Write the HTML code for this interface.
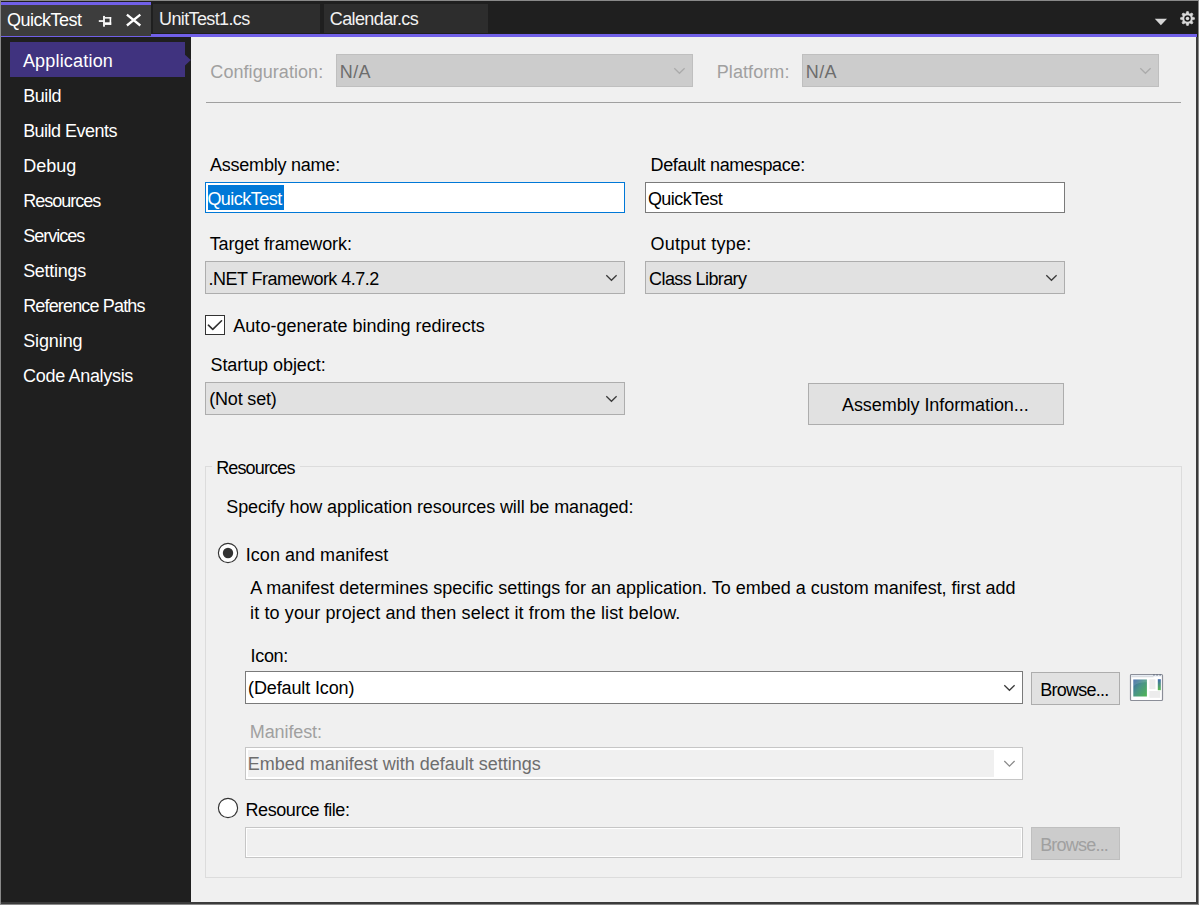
<!DOCTYPE html><html><head><meta charset="utf-8"><title>QuickTest</title><style>html,body{margin:0;padding:0;}body{width:1199px;height:905px;position:relative;overflow:hidden;background:#1f1f1f;font-family:"Liberation Sans",sans-serif;}.t{position:absolute;white-space:nowrap;margin:0;padding:0;}.r{position:absolute;display:block;}</style></head><body>
<div class="r" style="left:0px;top:0px;width:1199px;height:905px;background:#898989;"></div>
<div class="r" style="left:1px;top:1px;width:1197px;height:903px;background:#1f1f1f;"></div>
<div class="r" style="left:1px;top:902px;width:1197px;height:2px;background:#3b3b3b;"></div>
<div class="r" style="left:1196px;top:37px;width:2px;height:867px;background:#3b3b3b;"></div>
<div class="r" style="left:191px;top:37px;width:1005px;height:865px;background:#f0f0f0;"></div>
<div class="r" style="left:1px;top:2px;width:150px;height:3px;background:#7160e8;"></div>
<div class="r" style="left:1px;top:5px;width:150px;height:31px;background:#3d3d3d;"></div>
<div class="r" style="left:1px;top:36px;width:150px;height:1px;background:#7160e8;"></div>
<div class="r" style="left:151px;top:34px;width:1046px;height:3px;background:#7160e8;"></div>
<div class="r" style="left:153px;top:4px;width:167px;height:29px;background:#2d2d2d;"></div>
<div class="r" style="left:324px;top:4px;width:164px;height:29px;background:#2d2d2d;"></div>
<div class="t" style="left:7.10px;top:10px;font-size:18px;line-height:20px;letter-spacing:-0.519px;color:#ffffff;">QuickTest</div>
<div class="t" style="left:159.05px;top:9px;font-size:18px;line-height:20px;letter-spacing:-0.632px;color:#f1f1f1;">UnitTest1.cs</div>
<div class="t" style="left:329.85px;top:9px;font-size:18px;line-height:20px;letter-spacing:-0.625px;color:#f1f1f1;">Calendar.cs</div>
<svg class="r" style="left:97px;top:14px" width="16" height="14" viewBox="97 14 16 14" shape-rendering="auto"><rect x="98.8" y="20.2" width="4.6" height="1.7" fill="#fff"/><rect x="103.1" y="15.9" width="1.8" height="10.8" fill="#fff"/><rect x="104.8" y="17.1" width="6.4" height="1.5" fill="#fff"/><rect x="109.6" y="17.1" width="1.6" height="7.8" fill="#fff"/><rect x="104.8" y="22.3" width="6.4" height="2.6" fill="#fff"/></svg>
<svg class="r" style="left:124px;top:12px" width="20" height="16" viewBox="0 0 20 16"><path d="M2.9 2.6L16.3 13.5M16.3 2.6L2.9 13.5" stroke="#fff" stroke-width="2.3" fill="none"/></svg>
<svg class="r" style="left:1154px;top:18px" width="14" height="8" viewBox="0 0 14 8"><path d="M0.8 0.8H13L6.9 7.2Z" fill="#d6d6d6"/></svg>
<svg class="r" style="left:1179px;top:10px" width="18" height="18" viewBox="-0.5 -0.5 18 18"><path d="M6.40 3.37 L7.20 1.00 L8.80 1.00 L9.60 3.37 L10.15 3.60 L12.39 2.48 L13.52 3.61 L12.40 5.85 L12.63 6.40 L15.00 7.20 L15.00 8.80 L12.63 9.60 L12.40 10.15 L13.52 12.39 L12.39 13.52 L10.15 12.40 L9.60 12.63 L8.80 15.00 L7.20 15.00 L6.40 12.63 L5.85 12.40 L3.61 13.52 L2.48 12.39 L3.60 10.15 L3.37 9.60 L1.00 8.80 L1.00 7.20 L3.37 6.40 L3.60 5.85 L2.48 3.61 L3.61 2.48 L5.85 3.60Z" fill="#d9d9d9" stroke="#d9d9d9" stroke-width="0.6" stroke-linejoin="round"/><circle cx="8" cy="8" r="3.25" fill="#1f1f1f"/><circle cx="8" cy="8" r="1.75" fill="#d9d9d9"/></svg>
<div class="r" style="left:10px;top:42px;width:175px;height:35px;background:#40337f;"></div>
<svg class="r" style="left:185px;top:53px" width="6" height="14" viewBox="0 0 6 14"><path d="M0 1.7L5.8 7.1L0 12.5Z" fill="#40337f"/></svg>
<div class="t" style="left:22.90px;top:51px;font-size:18px;line-height:20px;letter-spacing:0.190px;color:#ffffff;">Application</div>
<div class="t" style="left:23.15px;top:86px;font-size:18px;line-height:20px;letter-spacing:-0.400px;color:#ffffff;">Build</div>
<div class="t" style="left:23.15px;top:121px;font-size:18px;line-height:20px;letter-spacing:-0.523px;color:#ffffff;">Build Events</div>
<div class="t" style="left:23.15px;top:156px;font-size:18px;line-height:20px;letter-spacing:0.038px;color:#ffffff;">Debug</div>
<div class="t" style="left:23.15px;top:191px;font-size:18px;line-height:20px;letter-spacing:-0.981px;color:#ffffff;">Resources</div>
<div class="t" style="left:23.15px;top:226px;font-size:18px;line-height:20px;letter-spacing:-1.000px;color:#ffffff;">Services</div>
<div class="t" style="left:23.15px;top:261px;font-size:18px;line-height:20px;letter-spacing:-0.279px;color:#ffffff;">Settings</div>
<div class="t" style="left:23.15px;top:296px;font-size:18px;line-height:20px;letter-spacing:-0.836px;color:#ffffff;">Reference Paths</div>
<div class="t" style="left:23.15px;top:331px;font-size:18px;line-height:20px;letter-spacing:-0.108px;color:#ffffff;">Signing</div>
<div class="t" style="left:23.05px;top:366px;font-size:18px;line-height:20px;letter-spacing:-0.313px;color:#ffffff;">Code Analysis</div>
<div class="t" style="left:210.35px;top:62px;font-size:18px;line-height:20px;letter-spacing:0.058px;color:#a0a0a0;">Configuration:</div>
<div class="r" style="left:336px;top:54px;width:357px;height:33px;background:#cccccc;box-shadow:inset 0 0 0 1px #bfbfbf"></div>
<div class="t" style="left:339.75px;top:62px;font-size:18px;line-height:20px;letter-spacing:0.400px;color:#6d6d6d;">N/A</div>
<svg class="r" style="left:672px;top:66px" width="16" height="11"><path transform="translate(2.30 2.20)" d="M0 0 L5.15 5.1 L10.3 0" fill="none" stroke="#ababab" stroke-width="1.25"/></svg>
<div class="t" style="left:716.75px;top:62px;font-size:18px;line-height:20px;letter-spacing:0.081px;color:#a0a0a0;">Platform:</div>
<div class="r" style="left:802px;top:54px;width:357px;height:33px;background:#cccccc;box-shadow:inset 0 0 0 1px #bfbfbf"></div>
<div class="t" style="left:805.75px;top:62px;font-size:18px;line-height:20px;letter-spacing:0.400px;color:#6d6d6d;">N/A</div>
<svg class="r" style="left:1138px;top:66px" width="16" height="11"><path transform="translate(2.30 2.20)" d="M0 0 L5.15 5.1 L10.3 0" fill="none" stroke="#ababab" stroke-width="1.25"/></svg>
<div class="r" style="left:206px;top:102px;width:975px;height:1px;background:#a0a0a0;"></div>
<div class="t" style="left:210.00px;top:155px;font-size:18px;line-height:20px;letter-spacing:-0.223px;color:#000000;">Assembly name:</div>
<div class="r" style="left:205px;top:182px;width:420px;height:31px;background:#ffffff;box-shadow:inset 0 0 0 1px #0078d7"></div>
<div class="r" style="left:208px;top:185px;width:76px;height:25px;background:#0078d7;"></div>
<div class="t" style="left:207.40px;top:189px;font-size:18px;line-height:20px;letter-spacing:-0.519px;color:#ffffff;">QuickTest</div>
<div class="t" style="left:650.50px;top:155px;font-size:18px;line-height:20px;letter-spacing:-0.321px;color:#000000;">Default namespace:</div>
<div class="r" style="left:645px;top:182px;width:420px;height:31px;background:#ffffff;box-shadow:inset 0 0 0 1px #7a7a7a"></div>
<div class="t" style="left:647.90px;top:189px;font-size:18px;line-height:20px;letter-spacing:-0.519px;color:#000000;">QuickTest</div>
<div class="t" style="left:209.65px;top:234px;font-size:18px;line-height:20px;letter-spacing:-0.113px;color:#000000;">Target framework:</div>
<div class="r" style="left:205px;top:261px;width:420px;height:33px;background:#e1e1e1;box-shadow:inset 0 0 0 1px #adadad"></div>
<div class="t" style="left:208.60px;top:269px;font-size:18px;line-height:20px;letter-spacing:-0.534px;color:#000000;">.NET Framework 4.7.2</div>
<svg class="r" style="left:604px;top:273px" width="16" height="11"><path transform="translate(2.30 2.20)" d="M0 0 L5.15 5.1 L10.3 0" fill="none" stroke="#3a3a3a" stroke-width="1.25"/></svg>
<div class="t" style="left:650.40px;top:234px;font-size:18px;line-height:20px;letter-spacing:0.245px;color:#000000;">Output type:</div>
<div class="r" style="left:645px;top:261px;width:420px;height:33px;background:#e1e1e1;box-shadow:inset 0 0 0 1px #adadad"></div>
<div class="t" style="left:649.10px;top:269px;font-size:18px;line-height:20px;letter-spacing:-0.592px;color:#000000;">Class Library</div>
<svg class="r" style="left:1044px;top:273px" width="16" height="11"><path transform="translate(2.30 2.20)" d="M0 0 L5.15 5.1 L10.3 0" fill="none" stroke="#3a3a3a" stroke-width="1.25"/></svg>
<div class="r" style="left:205px;top:315px;width:20px;height:20px;background:#ffffff;box-shadow:inset 0 0 0 1px #333333"></div>
<svg class="r" style="left:205px;top:315px" width="20" height="20" viewBox="0 0 20 20"><path d="M3.4 10.2L7.75 14.35L16.55 5.75" fill="none" stroke="#303030" stroke-width="1.6" stroke-linecap="round" stroke-linejoin="round"/></svg>
<div class="t" style="left:233.35px;top:316px;font-size:18px;line-height:20px;letter-spacing:0.005px;color:#000000;">Auto-generate binding redirects</div>
<div class="t" style="left:210.45px;top:355px;font-size:18px;line-height:20px;letter-spacing:-0.061px;color:#000000;">Startup object:</div>
<div class="r" style="left:205px;top:382px;width:420px;height:33px;background:#e1e1e1;box-shadow:inset 0 0 0 1px #adadad"></div>
<div class="t" style="left:209.15px;top:389px;font-size:18px;line-height:20px;letter-spacing:-0.163px;color:#000000;">(Not set)</div>
<svg class="r" style="left:604px;top:394px" width="16" height="11"><path transform="translate(2.30 2.20)" d="M0 0 L5.15 5.1 L10.3 0" fill="none" stroke="#3a3a3a" stroke-width="1.25"/></svg>
<div class="r" style="left:808px;top:383px;width:256px;height:42px;background:#e1e1e1;box-shadow:inset 0 0 0 1px #adadad"></div>
<div class="t" style="left:841.95px;top:395px;font-size:18px;line-height:20px;letter-spacing:-0.061px;color:#000000;">Assembly Information...</div>
<div class="r" style="left:205px;top:466px;width:977px;height:412px;background:transparent;box-shadow:inset 0 0 0 1px #dcdcdc"></div>
<div class="r" style="left:212px;top:460px;width:88px;height:14px;background:#f0f0f0;"></div>
<div class="t" style="left:216.15px;top:458px;font-size:18px;line-height:20px;letter-spacing:-0.844px;color:#000000;">Resources</div>
<div class="t" style="left:226.25px;top:497px;font-size:18px;line-height:20px;letter-spacing:-0.101px;color:#000000;">Specify how application resources will be managed:</div>
<svg class="r" style="left:217px;top:542px" width="23" height="23"><circle cx="11" cy="11" r="9.6" fill="#fff" stroke="#333" stroke-width="1.15"/><circle cx="11" cy="11" r="5.2" fill="#333"/></svg>
<div class="t" style="left:245.80px;top:545px;font-size:18px;line-height:20px;letter-spacing:0.028px;color:#000000;">Icon and manifest</div>
<div class="t" style="left:250.30px;top:578px;font-size:18px;line-height:20px;letter-spacing:-0.008px;color:#000000;">A manifest determines specific settings for an application. To embed a custom manifest, first add</div>
<div class="t" style="left:250.05px;top:603px;font-size:18px;line-height:20px;letter-spacing:0.123px;color:#000000;">it to your project and then select it from the list below.</div>
<div class="t" style="left:250.60px;top:646px;font-size:18px;line-height:20px;letter-spacing:-0.337px;color:#000000;">Icon:</div>
<div class="r" style="left:245px;top:671px;width:778px;height:33px;background:#ffffff;box-shadow:inset 0 0 0 1px #7a7a7a"></div>
<div class="t" style="left:248.05px;top:678px;font-size:18px;line-height:20px;letter-spacing:-0.131px;color:#000000;">(Default Icon)</div>
<svg class="r" style="left:1002px;top:683px" width="16" height="11"><path transform="translate(2.30 2.20)" d="M0 0 L5.15 5.1 L10.3 0" fill="none" stroke="#3a3a3a" stroke-width="1.25"/></svg>
<div class="r" style="left:1031px;top:672px;width:89px;height:33px;background:#e1e1e1;box-shadow:inset 0 0 0 1px #adadad"></div>
<div class="t" style="left:1040.15px;top:680px;font-size:18px;line-height:20px;letter-spacing:-0.750px;color:#000000;">Browse...</div>
<svg class="r" style="left:1129px;top:673px" width="36" height="30" viewBox="0 0 36 30"><defs><linearGradient id="g1" x1="0" y1="0" x2="1" y2="1"><stop offset="0" stop-color="#3a62a8"/><stop offset="0.45" stop-color="#4a9488"/><stop offset="1" stop-color="#4fb651"/></linearGradient><linearGradient id="g2" x1="0" y1="0" x2="0" y2="1"><stop offset="0" stop-color="#3f69ae"/><stop offset="1" stop-color="#58ba4e"/></linearGradient></defs><rect x="1.5" y="1.5" width="32" height="26" rx="1.0" fill="#ffffff" stroke="#8b8e98" stroke-width="1.2"/><rect x="2.2" y="2.2" width="30.6" height="1.3" fill="#dfe6ef"/><rect x="2.6" y="3.4" width="22" height="0.8" fill="#c9ccd2"/><rect x="24.3" y="1" width="1.3" height="1.6" fill="#6d7585"/><rect x="27.4" y="1" width="1.3" height="1.6" fill="#6d7585"/><rect x="30.5" y="1" width="1.3" height="1.6" fill="#6d7585"/><rect x="4.3" y="6.5" width="13.6" height="17" fill="url(#g1)"/><path d="M4.3 13.5C7 10.5 12 9.3 17.9 9.3V6.5H4.3Z" fill="#ffffff" opacity="0.13"/><rect x="20.4" y="6.3" width="6" height="9.8" fill="#ececec"/><rect x="20.4" y="18" width="10.8" height="6.8" fill="#ececec"/><rect x="28.8" y="6.2" width="3" height="11" fill="url(#g2)"/></svg>
<div class="t" style="left:249.75px;top:722px;font-size:18px;line-height:20px;letter-spacing:-0.094px;color:#a0a0a0;">Manifest:</div>
<div class="r" style="left:245px;top:747px;width:778px;height:33px;background:#ffffff;box-shadow:inset 0 0 0 1px #c6c6c6"></div>
<div class="r" style="left:248px;top:750px;width:746px;height:27px;background:#f0f0f0;"></div>
<div class="t" style="left:247.65px;top:754px;font-size:18px;line-height:20px;letter-spacing:-0.001px;color:#6d6d6d;">Embed manifest with default settings</div>
<svg class="r" style="left:1002px;top:759px" width="16" height="11"><path transform="translate(2.30 2.00)" d="M0 0 L5.15 5.1 L10.3 0" fill="none" stroke="#8a8a8a" stroke-width="1.25"/></svg>
<svg class="r" style="left:217px;top:797px" width="23" height="23"><circle cx="11" cy="11" r="9.6" fill="#fff" stroke="#333" stroke-width="1.15"/></svg>
<div class="t" style="left:245.55px;top:800px;font-size:18px;line-height:20px;letter-spacing:-0.435px;color:#000000;">Resource file:</div>
<div class="r" style="left:245px;top:827px;width:778px;height:31px;background:#f0f0f0;box-shadow:inset 0 0 0 1px #c6c6c6, inset 0 0 0 2px #ffffff"></div>
<div class="r" style="left:1031px;top:827px;width:89px;height:33px;background:#cccccc;box-shadow:inset 0 0 0 1px #bfbfbf"></div>
<div class="t" style="left:1040.15px;top:835px;font-size:18px;line-height:20px;letter-spacing:-0.788px;color:#a0a0a0;">Browse...</div>
</body></html>
